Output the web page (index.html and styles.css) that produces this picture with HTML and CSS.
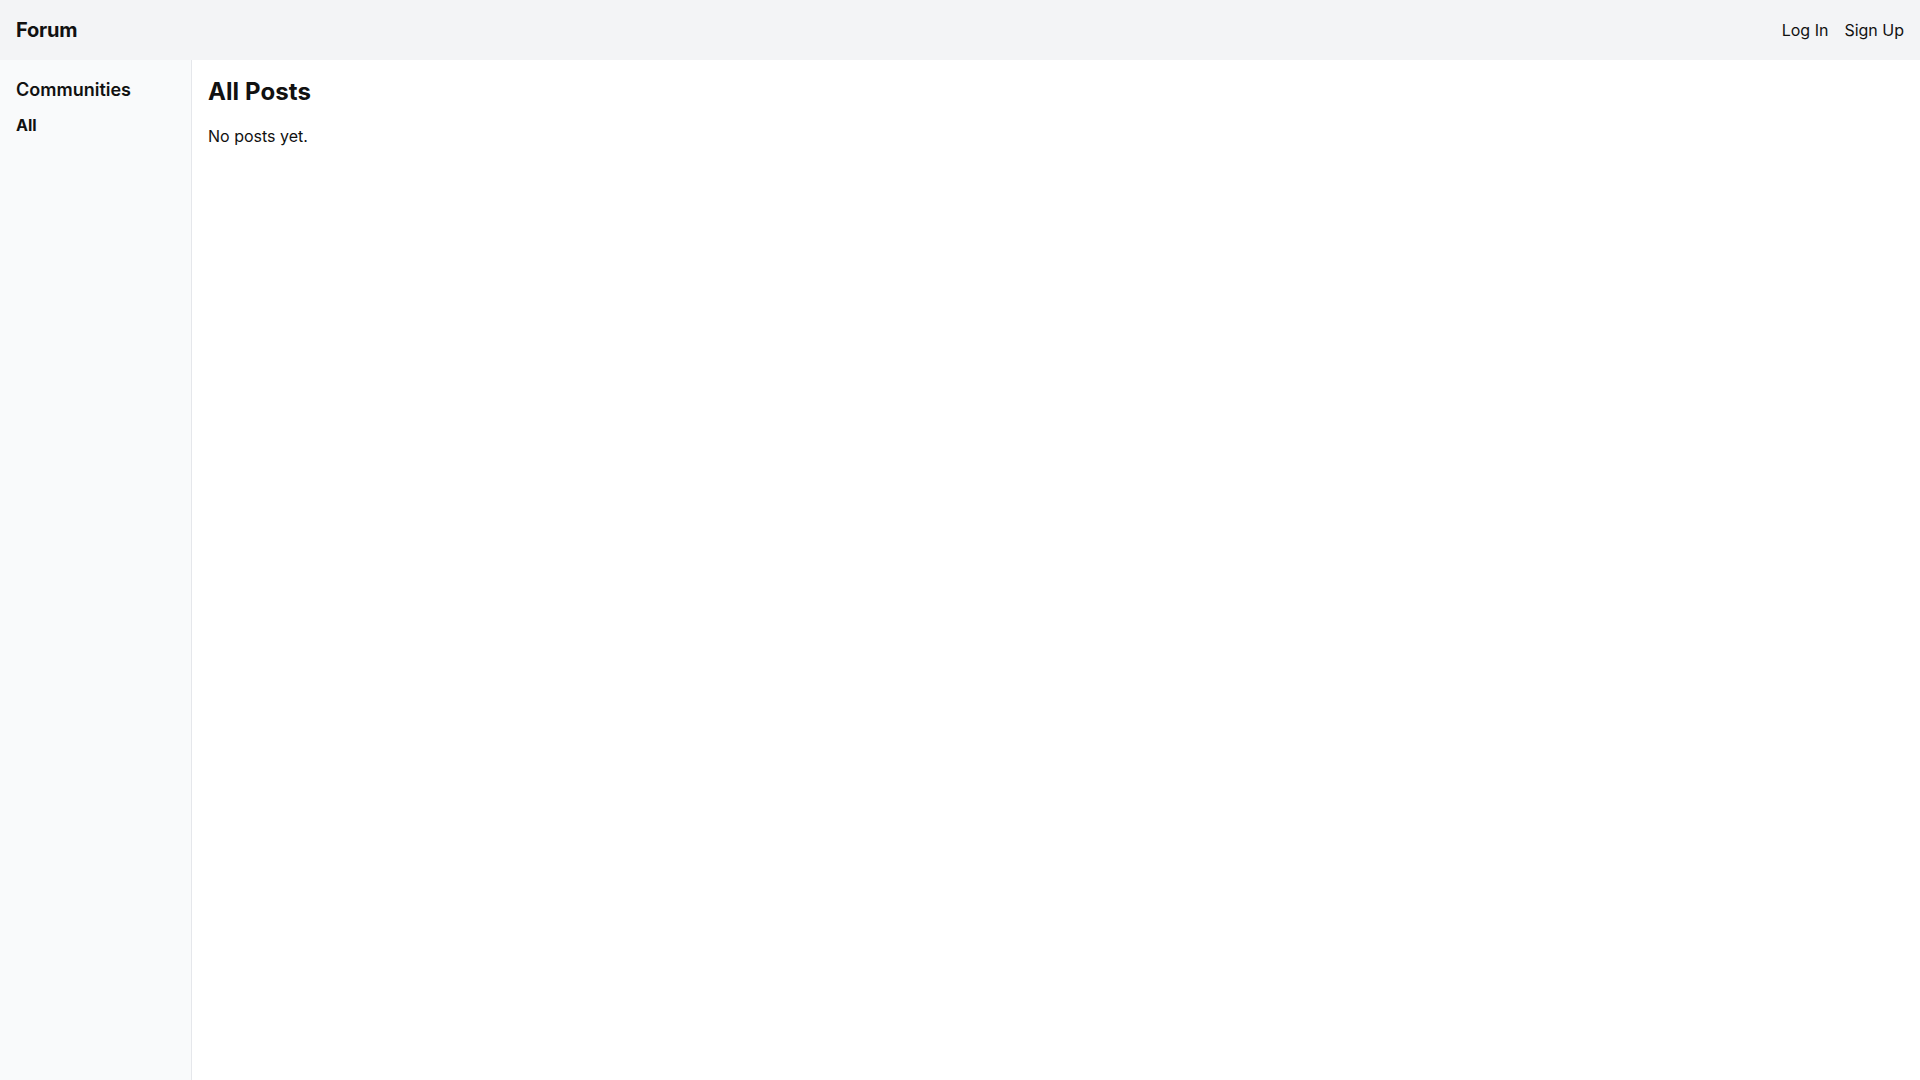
FILE: index.html
```html
<!DOCTYPE html>
<html lang="en">
<head>
    <meta charset="UTF-8">
    <meta name="viewport" content="width=device-width, initial-scale=1.0">
    <title>Forum</title>
    <link rel="stylesheet" href="styles.css">
</head>
<body>
    <header class="topbar">
        <a class="brand" href="#">Forum</a>
        <nav class="auth-links">
            <a href="#">Log In</a>
            <a href="#">Sign Up</a>
        </nav>
    </header>

    <div class="layout">
        <aside class="sidebar">
            <h2>Communities</h2>
            <ul class="community-list">
                <li><a class="active" href="#">All</a></li>
            </ul>
        </aside>

        <main class="content">
            <h1>All Posts</h1>
            <p class="empty">No posts yet.</p>
        </main>
    </div>
</body>
</html>
```

FILE: styles.css
```css
* {
    box-sizing: border-box;
}
html, body {
    height: 100%;
}
body {
    margin: 0;
    font-family: 'Inter', 'Noto Sans', sans-serif;
    color: #111;
    background-color: #ffffff;
    display: flex;
    flex-direction: column;
}
a {
    color: inherit;
    text-decoration: none;
}
.topbar {
    height: 60px;
    flex-shrink: 0;
    display: flex;
    align-items: center;
    justify-content: space-between;
    padding: 0 16px;
    background-color: #f3f4f6;
}
.brand {
    font-size: 20px;
    line-height: 28px;
    font-weight: 700;
    letter-spacing: -0.2px;
}
.auth-links {
    display: flex;
    gap: 16px;
    font-size: 16px;
    line-height: 24px;
}
.layout {
    flex: 1;
    display: flex;
}
.sidebar {
    width: 192px;
    flex-shrink: 0;
    padding: 16px;
    background-color: #f9fafb;
    border-right: 1px solid #e5e7eb;
}
.sidebar h2 {
    margin: 0 0 9px;
    font-size: 18px;
    line-height: 28px;
    font-weight: 600;
}
.community-list {
    list-style: none;
    margin: 0;
    padding: 0;
}
.community-list a {
    font-size: 16px;
    line-height: 24px;
}
.community-list a.active {
    font-weight: 700;
}
.content {
    flex: 1;
    padding: 16px;
}
.content h1 {
    margin: 0 0 16px;
    font-size: 24px;
    line-height: 32px;
    font-weight: 700;
    letter-spacing: 0.1px;
}
.empty {
    margin: 0;
    font-size: 16px;
    line-height: 24px;
}
```
